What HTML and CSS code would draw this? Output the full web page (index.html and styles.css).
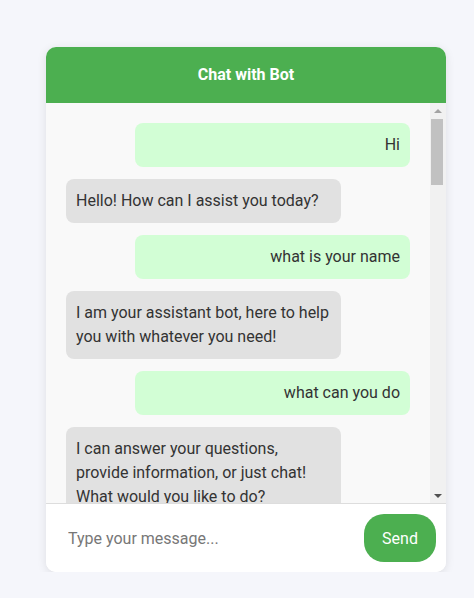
FILE: index.html
```html
<!DOCTYPE html>
<html>
<head>
<meta charset="utf-8">
<link rel="stylesheet" href="styles.css">
</head>
<body>
<div class="chat">
  <div class="chat-header">Chat with Bot</div>
  <div class="chat-body">
    <div class="messages">
      <div class="msg user">Hi</div>
      <div class="msg bot">Hello! How can I assist you today?</div>
      <div class="msg user">what is your name</div>
      <div class="msg bot">I am your assistant bot, here to help you with whatever you need!</div>
      <div class="msg user">what can you do</div>
      <div class="msg bot">I can answer your questions, provide information, or just chat! What would you like to do?</div>
    </div>
    <div class="scrollbar">
      <div class="sb-btn"><span class="arrow up"></span></div>
      <div class="sb-thumb"></div>
      <div class="sb-btn bottom"><span class="arrow down"></span></div>
    </div>
  </div>
  <div class="composer">
    <input class="text-input" type="text" placeholder="Type your message...">
    <button class="send">Send</button>
  </div>
</div>
</body>
</html>
```
FILE: styles.css
```css
html, body {
  margin: 0;
  padding: 0;
  background: #f5f6fb;
  font-family: Roboto, "Liberation Sans", sans-serif;
}
body {
  padding: 47px 0 0 46px;
}
.chat {
  width: 400px;
  height: 525px;
  background: #fff;
  border-radius: 10px;
  box-shadow: 0 2px 10px rgba(0, 0, 0, 0.1);
  display: flex;
  flex-direction: column;
  overflow: hidden;
}
.chat-header {
  background: #4caf50;
  color: #fff;
  font-weight: bold;
  font-size: 16px;
  line-height: 16px;
  height: 56px;
  box-sizing: border-box;
  padding: 20px;
  text-align: center;
}
.chat-body {
  height: 400px;
  flex: none;
  display: flex;
  background: #f9f9f9;
}
.messages {
  flex: 1;
  min-width: 0;
  overflow: hidden;
  padding: 20px;
  display: flex;
  flex-direction: column;
  gap: 12px;
}
.msg {
  width: 80%;
  box-sizing: border-box;
  padding: 10px;
  border-radius: 8px;
  font-size: 16px;
  line-height: 24px;
  color: #333;
  flex: none;
}
.user {
  align-self: flex-end;
  background: #d2fed5;
  text-align: right;
}
.bot {
  align-self: flex-start;
  background: #e1e1e1;
}
.scrollbar {
  width: 16px;
  flex: none;
  background: #f1f1f1;
  display: flex;
  flex-direction: column;
}
.sb-btn {
  height: 15px;
  flex: none;
  display: flex;
  align-items: center;
  justify-content: center;
}
.sb-btn.bottom {
  margin-top: auto;
}
.arrow {
  width: 0;
  height: 0;
  border-left: 4px solid transparent;
  border-right: 4px solid transparent;
}
.arrow.up {
  border-bottom: 4px solid #a3a3a3;
}
.arrow.down {
  border-top: 4px solid #505050;
}
.sb-thumb {
  height: 66px;
  margin: 1px 3px 0 1px;
  background: #c1c1c1;
}
.composer {
  border-top: 1px solid #ddd;
  padding: 10px;
  display: flex;
  gap: 10px;
  background: #fff;
}
.text-input {
  flex: 1;
  min-width: 0;
  border: none;
  outline: none;
  height: 48px;
  padding: 0 12px;
  font-family: Roboto, "Liberation Sans", sans-serif;
  font-size: 16px;
  color: #333;
  background: transparent;
}
.text-input::placeholder {
  color: #777;
}
.send {
  width: 72px;
  height: 48px;
  border: none;
  border-radius: 20px;
  background: #4caf50;
  color: #fff;
  font-family: Roboto, "Liberation Sans", sans-serif;
  font-size: 16px;
  padding: 0;
}
```
